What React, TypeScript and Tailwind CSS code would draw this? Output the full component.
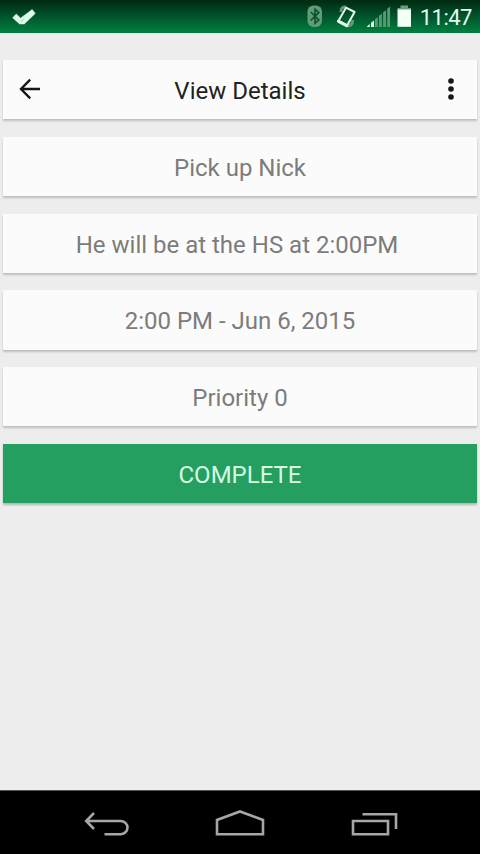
import type { ReactNode } from "react";

// the description keeps the trailing space it was typed with
const DETAILS = [
  "Pick up Nick",
  "He will be at the HS at 2:00PM ",
  "2:00 PM - Jun 6, 2015",
  "Priority 0",
];

function StatusBar() {
  return (
    <header className="flex h-[33px] shrink-0 items-center bg-linear-to-b from-[#002a10] via-[#00502a] via-45% to-[#008040] pr-2 pl-3">
      <svg width="24" height="33" viewBox="0 0 24 33" fill="#dffbe9">
        <path d="M.7 17.8 4.3 14.1 8.6 18.2 20.2 9.6 23.2 13.4 12.3 23.9H7.6Z" stroke="#dffbe9" strokeWidth=".6" strokeLinejoin="round" />
        <path d="M9.2 21.8 11.5 19.2" stroke="#8fc9a6" strokeWidth=".8" />
      </svg>

      <div className="ml-auto flex items-center">
        {/* Bluetooth */}
        <svg width="16" height="33" viewBox="0 0 16 33" fill="none">
          <rect x=".5" y="5.5" width="14.5" height="21.5" rx="6" fill="#5f9c77" />
          <path d="m3.8 12 8 8L8 23.3V9.2l3.8 3.4-8 7.8" stroke="#0a5029" strokeWidth="1.6" />
        </svg>
        {/* Vibrate */}
        <svg className="ml-3.5" width="20" height="33" viewBox="0 0 20 33" fill="none">
          <path d="M4 12C3.500 8.500 6 6.500 9 7M15.500 20c.5 3.500-1.500 6-5 6" stroke="#5f9c77" strokeWidth="3" />
          <path d="m9 7.700 8.600 4.300-7.400 13.300-8.700-4.500Z" stroke="#e2f7e9" strokeWidth="2" strokeLinejoin="round" />
          <path d="m1.500 21.300 8.200 4.300" stroke="#e2f7e9" strokeWidth="3.2" strokeLinecap="round" />
        </svg>
        {/* Signal */}
        <svg className="ml-2.5" width="24" height="33" viewBox="0 0 24 33">
          <path d="M0 27h2.800v-3L0 26.500ZM4 27h3v-6.500l-3 2.300Z" fill="#dff5e6" />
          <path d="M7.900 27h2.900v-9.800l-2.900 2ZM12 27h2.900V13.800l-2.900 2ZM16.100 27H19V10.300l-2.900 2ZM20.200 27h2.900V6.500l-2.900 2.200Z" fill="#569a72" />
        </svg>
        {/* Battery */}
        <svg className="ml-1.5" width="15" height="33" viewBox="0 0 15 33">
          <path d="M3.500 5.500H11V8h3v2H.500V8h3Z" fill="#6c9c80" />
          <path d="M.500 9.500H14v17.300H.500Z" fill="#f4fff8" />
        </svg>
        <span className="ml-2 pt-0.5 text-[22px] leading-none tracking-[-0.5px] text-[#e6fbee]">11:47</span>
      </div>
    </header>
  );
}

function Card({ children }: { children: ReactNode }) {
  return (
    <div className="flex h-[59.25px] items-center justify-center bg-[#fbfbfb] pt-[3px] text-2xl whitespace-pre text-[#7c7c7c] shadow-[0_1.5px_2px_rgba(0,0,0,0.2)]">
      {children}
    </div>
  );
}

function Toolbar() {
  return (
    <div className="flex h-[59.25px] items-center justify-between bg-[#fbfbfb] px-4 text-2xl text-[#222222] shadow-[0_1.5px_2px_rgba(0,0,0,0.2)]">
      <button aria-label="Back" className="pb-px">
        <svg width="22" height="22" viewBox="0 0 22 22" fill="none" stroke="#161616" strokeWidth="2.4">
          <path d="M21 11H3M11.200 1.700 2 11l9.200 9.300" />
        </svg>
      </button>
      <h1 className="pt-[3px]">View Details</h1>
      <button aria-label="More options" className="flex w-[22px] justify-center pb-px pl-px">
        <svg width="6" height="22" viewBox="0 0 6 22" fill="#161616">
          <circle cx="3" cy="3" r="2.8" />
          <circle cx="3" cy="11" r="2.8" />
          <circle cx="3" cy="19" r="2.8" />
        </svg>
      </button>
    </div>
  );
}

function NavBar() {
  return (
    <nav className="flex h-16 shrink-0 items-center justify-between border-t border-[#555555] bg-black px-[82px] pt-px">
      <svg width="48" height="28" viewBox="0 0 48 28" fill="none" stroke="#a6a6a6" strokeWidth="2.6">
        <path d="M4 12h34.500c3.800 0 7 2.800 7 6.600s-3.200 6.600-7 6.600H22.500M12 4l-7.800 8 7.800 8" />
      </svg>
      <svg width="50" height="28" viewBox="0 0 50 28" fill="none" stroke="#a6a6a6" strokeWidth="2.6">
        <path d="M2 25.300V11L25 2.500 48 11v14.300Z" />
      </svg>
      <svg width="48" height="28" viewBox="0 0 48 28" fill="none" stroke="#a6a6a6" strokeWidth="2.6">
        <path d="M3 12h35v13.300H3ZM12.500 5.200H46V20" />
      </svg>
    </nav>
  );
}

export default function App() {
  return (
    <div className="flex h-screen flex-col bg-[#ededed] font-[Roboto,sans-serif]">
      <StatusBar />
      <main className="flex flex-1 flex-col gap-[17.5px] border-t border-[#dff3e7] px-[3px] pt-[26px]">
        <Toolbar />
        {DETAILS.map((text) => (
          <Card key={text}>{text}</Card>
        ))}
        <button className="flex h-[59.25px] items-center justify-center bg-[#249f5f] pt-[3px] text-2xl text-[#d5fbe2] shadow-[0_1.5px_2px_rgba(0,80,35,0.3)]">
          COMPLETE
        </button>
      </main>
      <NavBar />
    </div>
  );
}
